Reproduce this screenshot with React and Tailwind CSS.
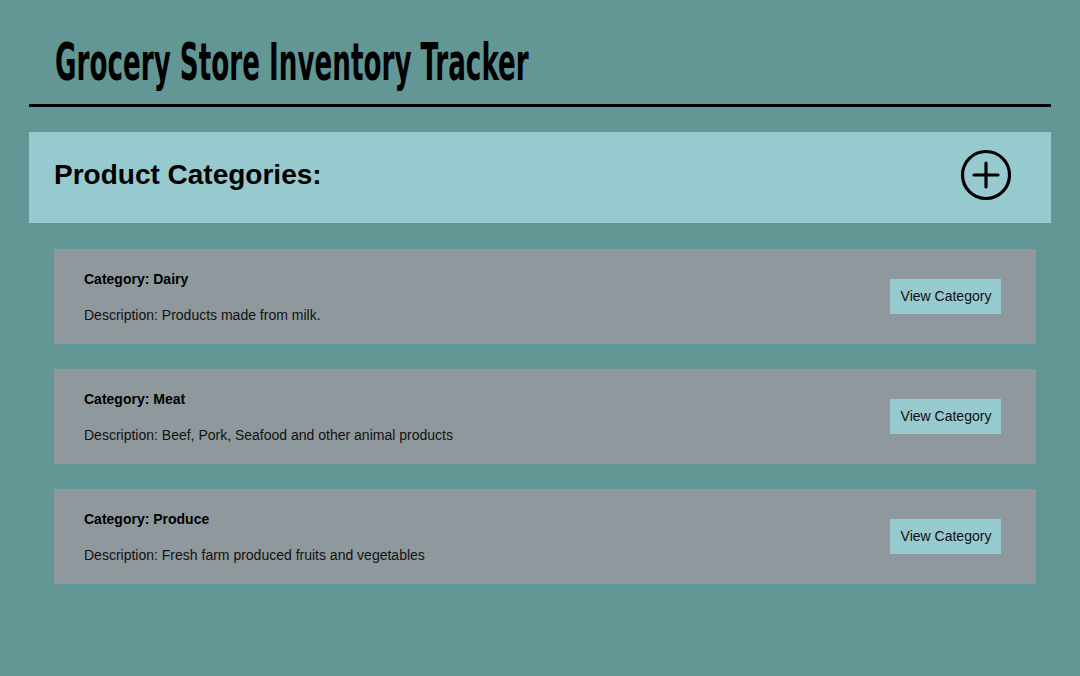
import React from 'react';

const categories = [
    { name: 'Dairy', description: 'Products made from milk.' },
    { name: 'Meat', description: 'Beef, Pork, Seafood and other animal products' },
    { name: 'Produce', description: 'Fresh farm produced fruits and vegetables' },
];

const PlusCircle = () => (
    <svg width="52" height="52" viewBox="0 0 52 52" fill="none" stroke="black" strokeWidth="3.2" strokeLinecap="round">
        <circle cx="26" cy="26" r="23.5" />
        <path d="M26 14v24M14 26h24" />
    </svg>
);

const CategoryCard = ({ name, description }) => (
    <div className="flex items-center justify-between bg-[#8f999d] h-[95px] pl-[30px] pr-[35px]">
        <div className="flex flex-col">
            <p className="text-[14px] font-bold leading-[18px] text-black">Category: {name}</p>
            <p className="text-[14px] leading-[18px] text-[#111] mt-[18px]">Description: {description}</p>
        </div>
        <button className="bg-[#97cace] h-[35px] w-[111px] pb-px pl-px text-[14px] text-[#111]">View Category</button>
    </div>
);

export default function App() {
    return (
        <div className="min-h-[676px] bg-[#629795] px-[29px] pt-[28px] font-['Liberation_Sans',Arial,sans-serif]">
            <div className="border-b-[3px] border-black pl-[26px] h-[79px]">
                <h1 className="origin-left scale-x-[0.56] whitespace-nowrap font-['DejaVu_Sans_Condensed',sans-serif] text-[52px] font-bold leading-[68px] text-black">
                    Grocery Store Inventory Tracker
                </h1>
            </div>
            <div className="mt-[25px] flex h-[91px] items-center justify-between bg-[#97cace] pb-[6px] pl-[25px] pr-[39px]">
                <h2 className="text-[28px] font-bold text-black">Product Categories:</h2>
                <PlusCircle />
            </div>
            <div className="mt-[26px] ml-[25px] mr-[15px] flex flex-col gap-[25px]">
                {categories.map((c) => (
                    <CategoryCard key={c.name} {...c} />
                ))}
            </div>
        </div>
    );
}
